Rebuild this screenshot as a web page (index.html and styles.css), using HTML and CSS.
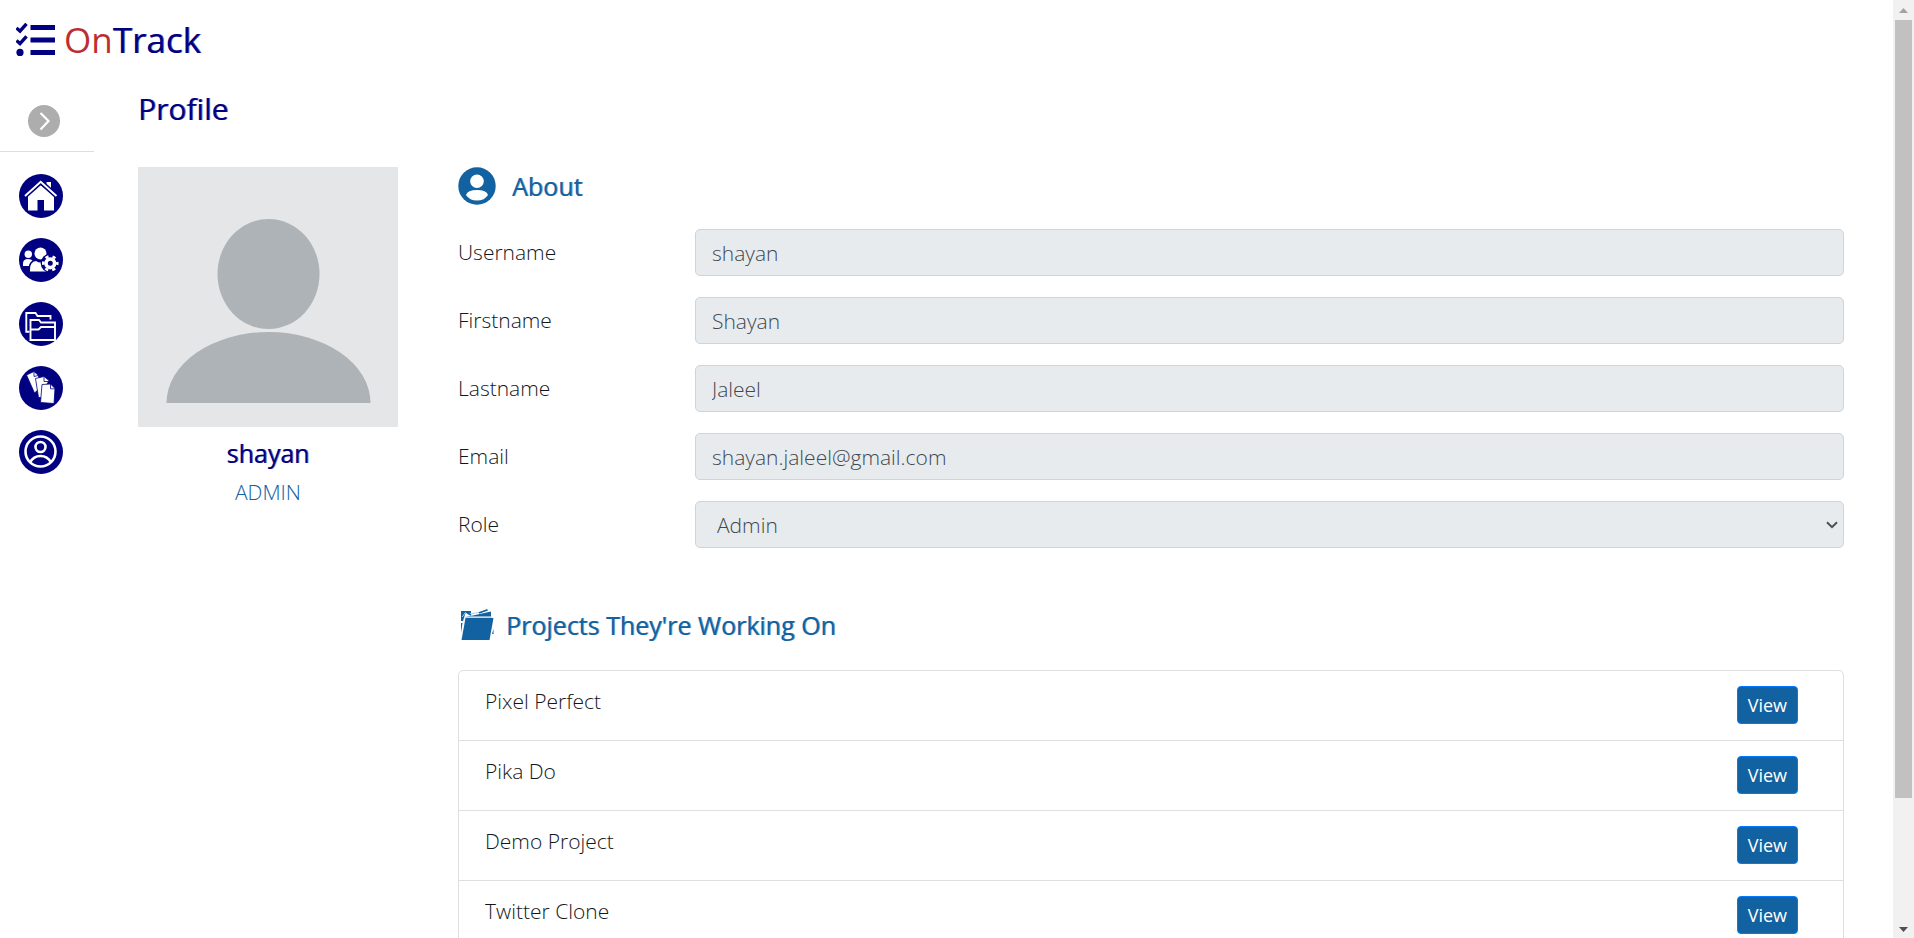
FILE: index.html
```html
<!DOCTYPE html>
<html lang="en">
<head>
<meta charset="utf-8">
<title>OnTrack - Profile</title>
<link rel="stylesheet" href="styles.css">
</head>
<body>
<div class="window">
  <div class="page">
    <header class="topbar">
      <a class="brand" href="#">
        <svg class="brand-icon" viewBox="0 0 40 34" aria-hidden="true">
          <path d="M.5 5 4 8.200 10.500 .8M.5 17.500 4 20.700 10.500 13.300" fill="none" stroke="currentColor" stroke-width="3.400"/>
          <circle cx="4" cy="29.400" r="3.600" fill="currentColor"/>
          <path d="M14.500 2H39v5H14.500zM14.500 14.500H39v5H14.500zM14.500 27H39v5H14.500z" fill="currentColor"/>
        </svg>
        <span class="brand-name"><span class="brand-on">On</span><span class="brand-track">Track</span></span>
      </a>
    </header>
    <div class="layout">
      <nav class="sidebar" aria-label="Main">
        <div class="sidebar-head">
          <button class="toggle" type="button" aria-label="Expand menu">
            <svg viewBox="0 0 32 32"><circle cx="16" cy="16" r="16" fill="#adadad"/><path d="M12.500 8 20.500 16 12.500 24.500" fill="none" stroke="#fff" stroke-width="2.200"/></svg>
          </button>
        </div>
        <ul class="menu">
          <li><a href="#" aria-label="Home"><svg viewBox="0 0 44 44"><circle cx="22" cy="22" r="22" fill="#000080"/><path d="M9 21.500 21.700 11 35 21.500V36.500H25V26H18.500v10.500H9z" fill="#fff"/><path d="M27.500 8H32v9l-4.500-4z" fill="#fff"/><path d="M5.500 22.500 21.700 7.800 38 22.500" fill="none" stroke="#000080" stroke-width="5"/><path d="M6 22 21.700 7.800 37.500 22" fill="none" stroke="#fff" stroke-width="2"/></svg></a></li>
          <li><a href="#" aria-label="Manage users"><svg viewBox="0 0 44 44"><circle cx="22" cy="22" r="22" fill="#000080"/><g fill="#fff"><circle cx="9.300" cy="16.300" r="3.700"/><path d="M4 28v-2.500q0-4.500 5-4.500 3.500 0 4.500 1.500Q10 25 10 28z"/><circle cx="21.500" cy="15.500" r="6"/><path d="M11 33.500v-2q0-8 6-8.500 4.500 3 9 0l3 10.500z"/></g><circle cx="31.300" cy="25.300" r="9.600" fill="#000080"/><g fill="none" stroke="#fff"><circle cx="31.300" cy="25.300" r="4.300" stroke-width="3.600"/><circle cx="31.300" cy="25.300" r="7" stroke-width="2.600" stroke-dasharray="3.300 4.030" stroke-dashoffset="1.650"/></g></svg></a></li>
          <li><a href="#" aria-label="Projects"><svg viewBox="0 0 44 44"><circle cx="22" cy="22" r="22" fill="#000080"/><g fill="none" stroke="#fff" stroke-width="1.900"><path d="M10.500 29.800H7.300V11H16.500l2 3H31.500v3.500"/><path d="M11.500 38V18H20l2 2.500H36V38z"/><path d="M11.500 27.500H19.500l2.500-2.500H36"/></g></svg></a></li>
          <li><a href="#" aria-label="Tickets"><svg viewBox="0 0 44 44"><circle cx="22" cy="22" r="22" fill="#000080"/><g fill="#fff" stroke="#000080" stroke-width=".8"><path d="M7.500 9 15 5.500 19.500 9.500 21 22 15.500 27z"/><path d="M15 6v4.500l5-1.200" fill="none"/><path d="M16.500 12.500 25 10.500 30 14.500 27 20 22.500 31.500H19.500z"/><path d="M25 11v4.500h5" fill="none"/><path d="M23 18.500 31.500 18 36 22.500 35 37.500 21.500 36.500z"/><path d="M31.500 18v4.800H36" fill="none"/></g></svg></a></li>
          <li><a href="#" aria-label="Profile"><svg viewBox="0 0 44 44"><circle cx="22" cy="22" r="22" fill="#000080"/><g fill="none" stroke="#fff" stroke-width="2.600"><circle cx="21.500" cy="21.500" r="15"/><circle cx="21.500" cy="17" r="5"/><path d="M11 32.500q3.500-6.500 10.500-6.500t10.500 6.500"/></g></svg></a></li>
        </ul>
      </nav>
      <main class="main">
        <h1 class="title">Profile</h1>
        <div class="columns">
          <section class="person">
            <svg class="avatar" viewBox="0 0 260 260" role="img" aria-label="Profile picture"><path d="M0 0h260v260H0z" fill="#e4e6e7"/><g fill="#aeb3b7"><ellipse cx="130.500" cy="107" rx="51" ry="55"/><path d="M28.500 236a102 71 0 0 1 204 0z"/></g></svg>
            <h2 class="person-name">shayan</h2>
            <p class="person-role">ADMIN</p>
          </section>
          <div class="details">
            <section>
              <h2 class="heading heading-about">
                <svg class="about-icon" viewBox="0 0 38 38" aria-hidden="true"><circle cx="19" cy="19" r="18.700" fill="#1261a0"/><circle cx="19" cy="14.300" r="6.800" fill="#fff"/><path d="M8 28q1.500-5 11-5t11 5q-3.500 5.500-11 5.500T8 28z" fill="#fff"/></svg>
                About
              </h2>
              <form class="fields">
                <label for="username">Username</label><input class="control" id="username" value="shayan" disabled>
                <label for="firstname">Firstname</label><input class="control" id="firstname" value="Shayan" disabled>
                <label for="lastname">Lastname</label><input class="control" id="lastname" value="Jaleel" disabled>
                <label for="email">Email</label><input class="control" id="email" value="shayan.jaleel@gmail.com" disabled>
                <label for="role">Role</label>
                <div class="select-wrap">
                  <select class="control control-select" id="role" disabled><option>Admin</option></select>
                  <svg class="select-arrow" viewBox="0 0 12 8" aria-hidden="true"><path d="M1 1.200 6 6.200 11 1.200" fill="none" stroke="#495057" stroke-width="2"/></svg>
                </div>
              </form>
            </section>
            <section>
              <h2 class="heading heading-projects">
                <svg class="projects-icon" viewBox="0 0 36 32" aria-hidden="true"><g fill="#1261a0"><path d="M7.500 9H35.500L31.500 31H3.500z"/><path d="M7.500 7.500 15 6.500 33 2.500V7.500z"/><path d="M3 2h10v2H7.500L5 12H3zM3 14h1.500L3 24zM35.500 20v5h-1.500z"/></g><path d="M10 5.500 30 1.500M7 8.300H34M4 8 8 3" fill="none" stroke="#b5cde2" stroke-width="1"/><path d="M21 4 29.500 .8M8 3l5 3" fill="none" stroke="#1261a0" stroke-width="1.500"/></svg>
                Projects They're Working On
              </h2>
              <ul class="projects">
                <li><span>Pixel Perfect</span><button type="button" class="view">View</button></li>
                <li><span>Pika Do</span><button type="button" class="view">View</button></li>
                <li><span>Demo Project</span><button type="button" class="view">View</button></li>
                <li><span>Twitter Clone</span><button type="button" class="view">View</button></li>
              </ul>
            </section>
          </div>
        </div>
      </main>
    </div>
  </div>
  <div class="scrollbar" aria-hidden="true">
    <svg class="scroll-arrow" viewBox="0 0 21 20"><path d="M6 13h9l-4.500-5z" fill="#a3a3a3"/></svg>
    <div class="scroll-thumb"></div>
    <div class="scroll-rest"></div>
    <svg class="scroll-arrow" viewBox="0 0 21 20"><path d="M6 9h9l-4.500 5z" fill="#505050"/></svg>
  </div>
</div>
</body>
</html>
```
FILE: styles.css
```css
* { box-sizing: border-box; }
body {
  margin: 0;
  background: #fff;
  color: #14171a;
  font-family: "Open Sans", sans-serif;
  font-size: 21px;
  font-weight: 300;
  line-height: 30px;
}
h1, h2, p, ul { margin: 0; padding: 0; font-weight: 400; }
ul { list-style: none; font-weight: inherit; }
svg { display: block; flex: none; }

.window { display: flex; height: 100vh; overflow: hidden; }
.page { flex: 1; min-width: 0; overflow: hidden; }

.topbar { padding: 16px; }
.brand {
  display: flex;
  align-items: center;
  gap: 8px;
  height: 48px;
  color: #000080;
  text-decoration: none;
  font-size: 35px;
  font-weight: 400;
}
.brand-icon { width: 40px; height: 34px; }
.brand-on { color: #bb2f33; }
.brand-track, .title, .person-name { text-shadow: 1px 0 0 rgba(0, 0, 128, .6); }

.layout { display: flex; }
.sidebar { width: 94px; flex: none; }
.sidebar-head { padding: 25px 0 14px 28px; border-bottom: 1px solid #dedede; }
.toggle { display: block; width: 32px; height: 32px; padding: 0; border: 0; background: none; }
.menu { display: grid; gap: 20px; padding: 22px 0 0 19px; }
.menu a { display: block; width: 44px; }

.main { flex: 1; min-width: 0; padding: 11px 49px 0 44px; }
.title { color: #000080; font-size: 30px; line-height: 36px; }
.columns { display: flex; gap: 60px; margin-top: 40px; }
.person { width: 260px; flex: none; text-align: center; }
.person-name { margin-top: 11px; color: #000080; font-size: 25px; line-height: 30px; }
.person-role { margin-top: 9px; color: #1261a0; font-weight: 300; }
.details { flex: 1; min-width: 0; }

.heading {
  display: flex;
  align-items: center;
  height: 38px;
  color: #1261a0;
  font-size: 25px;
  text-shadow: 1px 0 0 rgba(18, 97, 160, .6);
}
.heading-about { gap: 16px; }
.heading-projects { gap: 12px; margin-top: 58px; }
.about-icon { width: 38px; height: 38px; }
.projects-icon { width: 36px; height: 32px; }

.fields { display: grid; grid-template-columns: 237px 1fr; row-gap: 21px; margin-top: 24px; }
.fields label { padding-top: 8px; }
.control {
  display: block;
  width: 100%;
  height: 47px;
  padding: 7px 16px;
  border: 1px solid #ced4da;
  border-radius: 5px;
  background: #e7ebee;
  color: #42484e;
  font: inherit;
  opacity: 1;
}
.select-wrap { position: relative; }
.control-select { appearance: none; padding: 7px 21px; }
.select-arrow { position: absolute; top: 20px; right: 6px; width: 12px; height: 8px; pointer-events: none; }

.projects { margin-top: 26px; border: 1px solid #dfdfdf; border-radius: 5px; }
.projects li {
  display: flex;
  justify-content: space-between;
  align-items: flex-start;
  height: 70px;
  padding: 15px 45px 0 26px;
  border-bottom: 1px solid #dfdfdf;
}
.view {
  padding: 3px 10px;
  border: 1px solid #007bff;
  border-radius: 4px;
  background: #1261a0;
  color: #fff;
  font: 400 18px/30px "Open Sans", sans-serif;
}

.scrollbar { display: flex; flex-direction: column; width: 21px; flex: none; background: #f1f1f1; }
.scroll-arrow { width: 21px; height: 20px; }
.scroll-thumb { flex: 13; margin: 0 2px; background: #c1c1c1; }
.scroll-rest { flex: 2; }
```
